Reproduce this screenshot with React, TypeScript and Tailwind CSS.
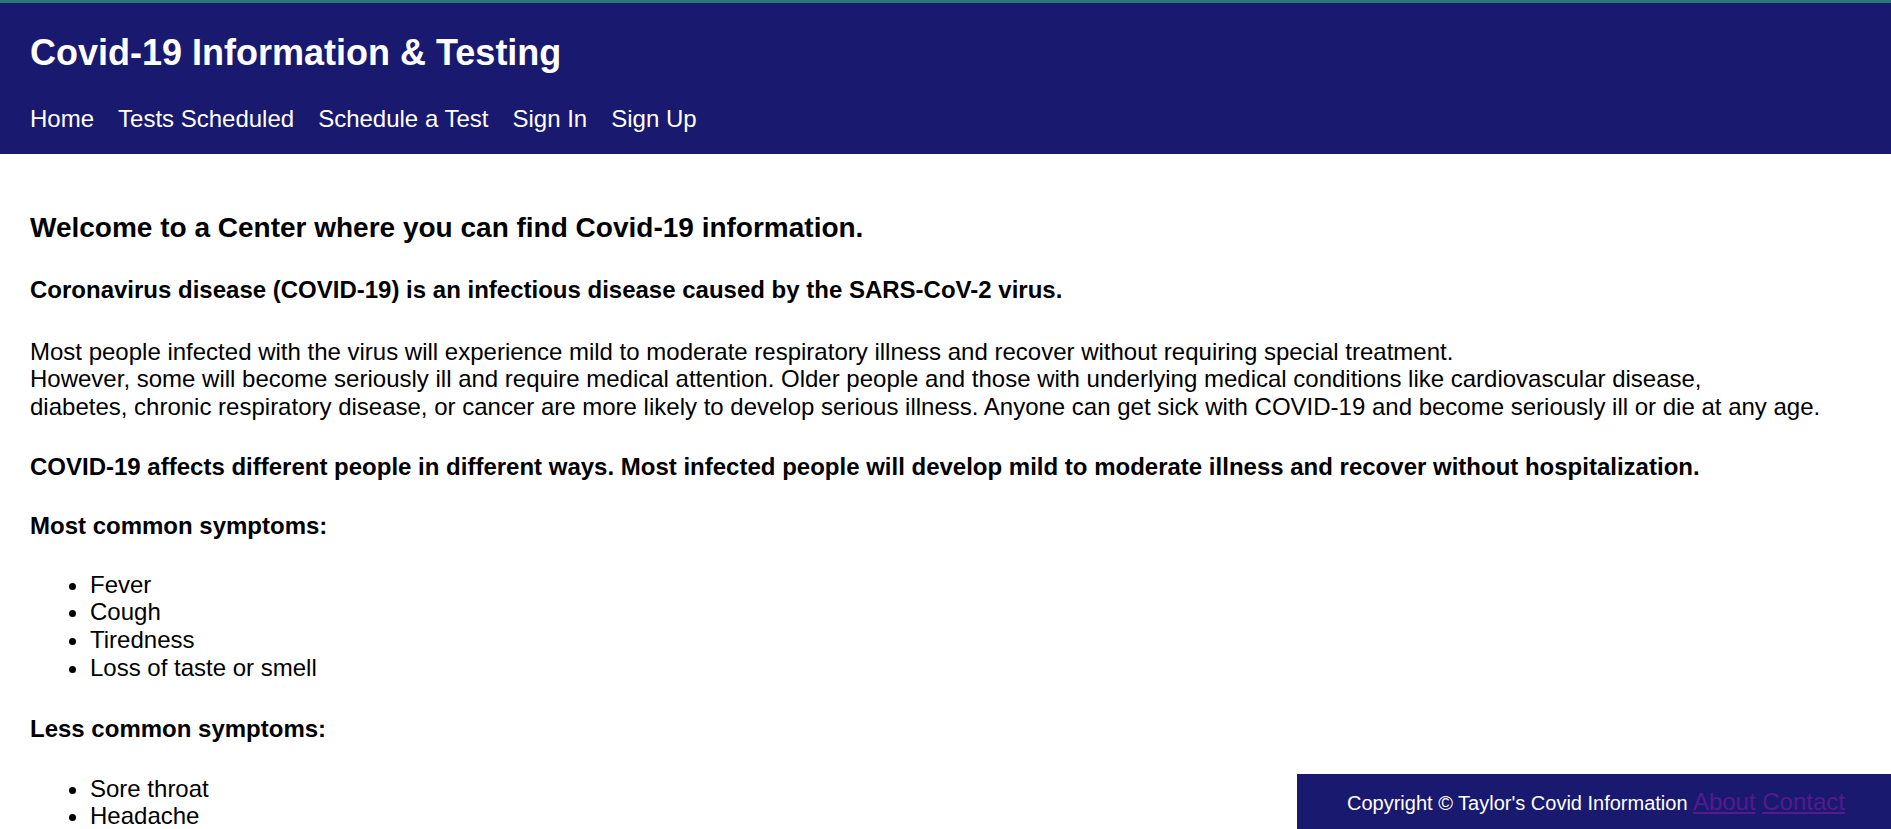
import React from "react";

const navItems = ["Home", "Tests Scheduled", "Schedule a Test", "Sign In", "Sign Up"];

export default function App() {
  return (
    <div className="min-h-screen bg-white text-black font-['Liberation_Sans',Arial,sans-serif]">
      <header className="border-t-[3px] border-[#2a7a78] bg-[#191970] pl-[30px] pt-[29px] pb-[21px] text-white">
        <h2 className="text-[36px] font-bold leading-[41px]">Covid-19 Information &amp; Testing</h2>
        <nav className="mt-[32px] flex gap-[24px] text-[24px] leading-[28px]">
          {navItems.map((n) => (
            <a key={n} href="#" className="text-white no-underline">
              {n}
            </a>
          ))}
        </nav>
      </header>

      <main className="pl-[30px] pr-[30px] pb-[120px] text-[24px] leading-[27.6px]">
        <h3 className="pt-[58px] text-[28px] font-bold leading-[32.2px]">
          Welcome to a Center where you can find Covid-19 information.
        </h3>
        <h4 className="mt-[32px] font-bold">
          Coronavirus disease (COVID-19) is an infectious disease caused by the SARS-CoV-2 virus.
        </h4>
        <p className="mt-[34px]">
          Most people infected with the virus will experience mild to moderate respiratory illness and recover without requiring special treatment.
          <br />
          However, some will become seriously ill and require medical attention. Older people and those with underlying medical conditions like cardiovascular disease,
          <br />
          diabetes, chronic respiratory disease, or cancer are more likely to develop serious illness. Anyone can get sick with COVID-19 and become seriously ill or die at any age.
        </p>
        <h4 className="mt-[32px] font-bold">
          COVID-19 affects different people in different ways. Most infected people will develop mild to moderate illness and recover without hospitalization.
        </h4>
        <h4 className="mt-[32px] font-bold">Most common symptoms:</h4>
        <ul className="mt-[31px] list-disc pl-[60px]">
          <li>Fever</li>
          <li>Cough</li>
          <li>Tiredness</li>
          <li>Loss of taste or smell</li>
        </ul>
        <h4 className="mt-[34px] font-bold">Less common symptoms:</h4>
        <ul className="mt-[32px] list-disc pl-[60px]">
          <li>Sore throat</li>
          <li>Headache</li>
          <li>Aches and pains</li>
          <li>Diarrhoea</li>
          <li>A rash on skin, or discolouration of fingers or toes</li>
          <li>Red or irritated eyes</li>
        </ul>
        <h4 className="mt-[32px] font-bold">Serious symptoms:</h4>
        <ul className="mt-[32px] list-disc pl-[60px]">
          <li>Difficulty breathing or shortness of breath</li>
          <li>Loss of speech or mobility, or confusion</li>
          <li>Chest pain</li>
        </ul>
      </main>

      <footer className="fixed bottom-0 right-0 flex h-[55px] w-[594px] items-center justify-center bg-[#191970] pt-[3px] pl-[4px]">
        <p className="text-[24px] leading-[27.6px] text-white">
          <span className="text-[20px]">Copyright © Taylor's Covid Information</span>{" "}
          <a href="#" className="text-[#551a8b] underline">
            About
          </a>{" "}
          <a href="#" className="text-[#551a8b] underline">
            Contact
          </a>
        </p>
      </footer>
    </div>
  );
}
